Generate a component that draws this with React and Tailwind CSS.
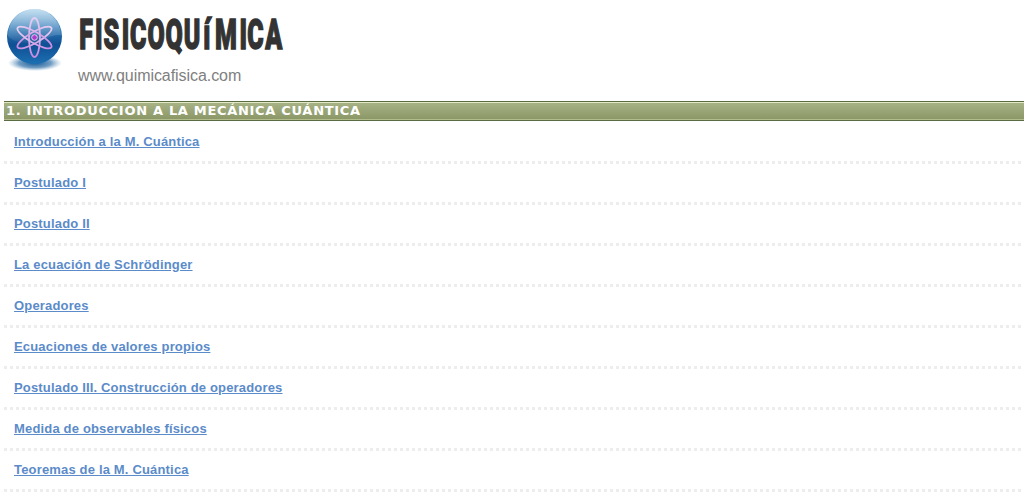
const temas = [
  'Introducción a la M. Cuántica',
  'Postulado I',
  'Postulado II',
  'La ecuación de Schrödinger',
  'Operadores',
  'Ecuaciones de valores propios',
  'Postulado III. Construcción de operadores',
  'Medida de observables físicos',
  'Teoremas de la M. Cuántica',
];

export default function App() {
  return (
    <div className="h-[500px] overflow-hidden bg-white pl-1 font-['Liberation_Sans',Arial,sans-serif]">
      {/* Cabecera */}
      <header className="flex h-[101px]">
        <Logo />
        <div className="pl-2.5">
          <h1 className="h-[66px]">
            <Titulo />
          </h1>
          <p className="text-[16px] leading-[19px] tracking-[-0.06px] text-[#808080]">www.quimicafisica.com</p>
        </div>
      </header>

      <h2 className="h-5 border-y border-[#5b6b42] bg-linear-to-b from-[#a9b487] to-[#8b9666] font-['DejaVu_Sans',Verdana,sans-serif] text-[13px] font-bold text-white">
        <span className="flex h-[18px] items-center border-t border-b border-t-[#e3e8c4] border-b-[#b3bd8c] pl-0.5 tracking-[0.69px] whitespace-nowrap">
          1. INTRODUCCION A LA MECÁNICA CUÁNTICA
        </span>
      </h2>

      {/* Lista de temas */}
      <ul>
        {temas.map(tema => (
          <li key={tema} className="h-[41px]">
            <div className="h-10 pt-[13px] pl-2.5 text-[13px] leading-[15px] font-bold tracking-[0.17px]">
              <a href="#" className="text-[#5b8bc9] underline">{tema}</a>
            </div>
            <div className="h-[3px] bg-[repeating-linear-gradient(90deg,#ededed_0_3px,transparent_3px_6px)]" />
          </li>
        ))}
      </ul>
    </div>
  );
}

function Titulo() {
  return (
    <svg width="210" height="66" viewBox="78 0 210 66" className="block">
      <g
        transform="scale(0.58 1)"
        fill="#333"
        stroke="#333"
        strokeWidth="1.5"
        fontFamily="Roboto, sans-serif"
        fontWeight="900"
        fontSize="43"
      >
        <text y="49.4" x="136.5 164 178.5 209.8 224 254.5 285.5 317">FISICOQU</text>
        <text y="49.4" x="350.5">í</text>
        <text y="49.4" x="370.5 413 426.5 457.5">MICA</text>
      </g>
    </svg>
  );
}

function Logo() {
  return (
    <svg width="64" height="76" viewBox="4 0 64 76" className="block shrink-0">
      <defs>
        <linearGradient id="esfera" x1="0" y1="0" x2="0" y2="1">
          <stop offset="0" stopColor="#7db9e0" />
          <stop offset="0.35" stopColor="#2f78b5" />
          <stop offset="0.65" stopColor="#0f4f93" />
          <stop offset="1" stopColor="#1c70b3" />
        </linearGradient>
        <linearGradient id="brillo" x1="0" y1="0" x2="0" y2="1">
          <stop offset="0" stopColor="#fff" stopOpacity="0.55" />
          <stop offset="1" stopColor="#fff" stopOpacity="0.03" />
        </linearGradient>
        <linearGradient id="orbita" x1="0" y1="0" x2="0" y2="1">
          <stop offset="0" stopColor="#e6d0f2" />
          <stop offset="1" stopColor="#cb8ae2" />
        </linearGradient>
        <radialGradient id="sombra">
          <stop offset="0" stopColor="#155795" stopOpacity="1" />
          <stop offset="0.6" stopColor="#427daf" stopOpacity="0.75" />
          <stop offset="1" stopColor="#7da8cc" stopOpacity="0" />
        </radialGradient>
      </defs>
      <ellipse cx="35" cy="63" rx="27" ry="8" fill="url(#sombra)" />
      <circle cx="34.5" cy="36.5" r="27.5" fill="url(#esfera)" />
      <path d="M8 36a26.5 26.5 0 0 1 53-1C49 34 43 43 27 43 18 43 11 40 8 36Z" fill="url(#brillo)" />
      <g fill="none" stroke="url(#orbita)" strokeWidth="1.8">
        <ellipse cx="34.5" cy="37.5" rx="5.5" ry="19.5" />
        <ellipse cx="34.5" cy="37.5" rx="5.5" ry="19.5" transform="rotate(60 34.5 37.5)" />
        <ellipse cx="34.5" cy="37.5" rx="5.5" ry="19.5" transform="rotate(-60 34.5 37.5)" />
      </g>
      <circle cx="34.5" cy="37.5" r="2.8" fill="#ad3bc9" stroke="#e8caf3" strokeWidth="1" />
    </svg>
  );
}
